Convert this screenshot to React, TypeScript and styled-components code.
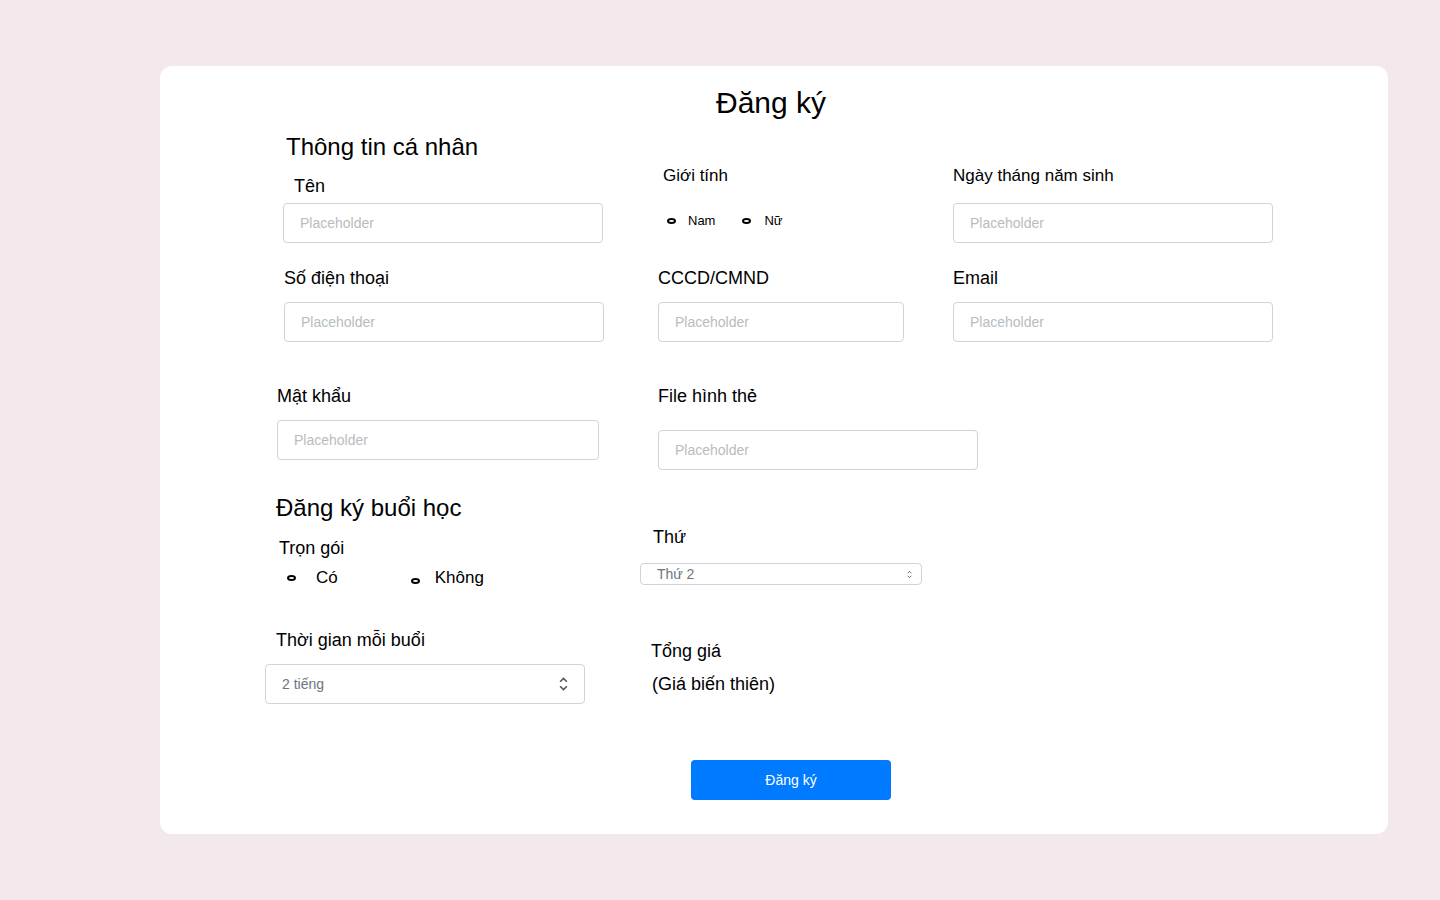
import React from 'react'
import styled, { createGlobalStyle } from 'styled-components'

const GlobalStyle = createGlobalStyle`
  html, body {
    margin: 0;
    padding: 0;
    background: #f3e8ec;
    font-family: 'Liberation Sans', Arial, sans-serif;
    color: #000;
  }
`

const Page = styled.div`
  width: 1440px;
  height: 900px;
  padding-top: 66px;
  padding-left: 160px;
  box-sizing: border-box;
`

const Card = styled.div`
  width: 1228px;
  height: 768px;
  background: #fff;
  border-radius: 12px;
  padding-top: 21px;
  box-sizing: border-box;
`

const Title = styled.h1`
  margin: 0;
  padding-right: 6px;
  font-size: 30px;
  line-height: 32px;
  font-weight: 400;
  text-align: center;
`

const Row = styled.div<{ $mt: number }>`
  display: flex;
  align-items: flex-start;
  margin-top: ${(p) => p.$mt}px;
`

const Col = styled.div<{ $w?: number }>`
  display: flex;
  flex-direction: column;
  align-items: flex-start;
  ${(p) => (p.$w ? `width: ${p.$w}px; flex: none;` : 'flex: 1;')}
`

const Heading = styled.h2<{ $ml: number; $mt?: number }>`
  margin: ${(p) => p.$mt || 0}px 0 0 ${(p) => p.$ml}px;
  font-size: 24px;
  line-height: 28px;
  font-weight: 400;
`

const Label = styled.div<{ $ml: number; $mt?: number; $size?: number }>`
  margin: ${(p) => p.$mt || 0}px 0 0 ${(p) => p.$ml}px;
  font-size: ${(p) => p.$size || 18}px;
  line-height: 22px;
`

const Input = styled.input<{ $ml: number; $mt?: number; $w?: number }>`
  margin: ${(p) => p.$mt || 0}px 0 0 ${(p) => p.$ml}px;
  width: ${(p) => p.$w || 320}px;
  height: 40px;
  box-sizing: border-box;
  border: 1px solid #ced4da;
  border-radius: 4px;
  padding: 0 16px;
  font-family: 'Liberation Sans', Arial, sans-serif;
  font-size: 14px;
  outline: none;
  &::placeholder {
    color: #b8bcc0;
  }
`

const SelectBox = styled.div<{ $ml: number; $mt?: number; $w: number; $h: number; $pr: number }>`
  margin: ${(p) => p.$mt || 0}px 0 0 ${(p) => p.$ml}px;
  width: ${(p) => p.$w}px;
  height: ${(p) => p.$h}px;
  box-sizing: border-box;
  border: 1px solid #ced4da;
  border-radius: 4px;
  padding: 0 ${(p) => p.$pr}px 0 16px;
  display: flex;
  align-items: center;
  justify-content: space-between;
  font-size: 14px;
  color: #6c757d;
`

const RadioGroup = styled.div<{ $ml: number; $mt?: number; $size: number }>`
  margin: ${(p) => p.$mt || 0}px 0 0 ${(p) => p.$ml}px;
  display: flex;
  align-items: center;
  font-size: ${(p) => p.$size}px;
  line-height: ${(p) => p.$size + 4}px;
`

const RadioOption = styled.label<{ $gap: number; $mr?: number; $dy?: number }>`
  display: flex;
  align-items: center;
  gap: ${(p) => p.$gap}px;
  margin-right: ${(p) => p.$mr || 0}px;
  & > span:first-child {
    margin-top: ${(p) => p.$dy || 0}px;
  }
`

const Dot = styled.span`
  display: inline-block;
  width: 9px;
  height: 6px;
  box-sizing: border-box;
  border: 2px solid #000;
  border-radius: 50%;
`

const TextLine = styled.div<{ $ml: number; $mt?: number }>`
  margin: ${(p) => p.$mt || 0}px 0 0 ${(p) => p.$ml}px;
  font-size: 18px;
  line-height: 22px;
`

const Submit = styled.button`
  margin: 56px 0 0 531px;
  width: 200px;
  height: 40px;
  border: none;
  border-radius: 4px;
  background: #007bff;
  color: #fff;
  font-family: 'Liberation Sans', Arial, sans-serif;
  font-size: 14px;
`

const Chevrons = ({ w, h }: { w: number; h: number }) => (
  <svg width={w} height={h} viewBox="0 0 8 14" fill="none" stroke="#555" strokeWidth="1.4">
    <path d="M1 5 L4 2 L7 5" />
    <path d="M1 9 L4 12 L7 9" />
  </svg>
)

export default function App() {
  return (
    <>
      <GlobalStyle />
      <Page>
        <Card>
          <Title>Đăng ký</Title>

          <Row $mt={14}>
            <Col $w={480}>
              <Heading $ml={126}>Thông tin cá nhân</Heading>
              <Label $ml={134} $mt={14}>Tên</Label>
              <Input $ml={123} $mt={6} placeholder="Placeholder" />
            </Col>
            <Col $w={313}>
              <Label $ml={23} $mt={32} $size={17}>Giới tính</Label>
              <RadioGroup $ml={27} $mt={25} $size={13}>
                <RadioOption $gap={12} $mr={27}>
                  <Dot />
                  <span>Nam</span>
                </RadioOption>
                <RadioOption $gap={13}>
                  <Dot />
                  <span>Nữ</span>
                </RadioOption>
              </RadioGroup>
            </Col>
            <Col>
              <Label $ml={0} $mt={32} $size={17}>Ngày tháng năm sinh</Label>
              <Input $ml={0} $mt={16} placeholder="Placeholder" />
            </Col>
          </Row>

          <Row $mt={24}>
            <Col $w={480}>
              <Label $ml={124}>Số điện thoại</Label>
              <Input $ml={124} $mt={13} placeholder="Placeholder" />
            </Col>
            <Col $w={313}>
              <Label $ml={18}>CCCD/CMND</Label>
              <Input $ml={18} $mt={13} $w={246} placeholder="Placeholder" />
            </Col>
            <Col>
              <Label $ml={0}>Email</Label>
              <Input $ml={0} $mt={13} placeholder="Placeholder" />
            </Col>
          </Row>

          <Row $mt={43}>
            <Col $w={480}>
              <Label $ml={117}>Mật khẩu</Label>
              <Input $ml={117} $mt={13} $w={322} placeholder="Placeholder" />
            </Col>
            <Col $w={480}>
              <Label $ml={18}>File hình thẻ</Label>
              <Input $ml={18} $mt={23} placeholder="Placeholder" />
            </Col>
          </Row>

          <Row $mt={24}>
            <Col $w={480}>
              <Heading $ml={116}>Đăng ký buổi học</Heading>
              <Label $ml={119} $mt={15}>Trọn gói</Label>
              <RadioGroup $ml={127} $mt={8} $size={17}>
                <RadioOption $gap={20} $mr={73}>
                  <Dot />
                  <span>Có</span>
                </RadioOption>
                <RadioOption $gap={15} $dy={6}>
                  <Dot />
                  <span>Không</span>
                </RadioOption>
              </RadioGroup>
            </Col>
            <Col $w={313}>
              <Label $ml={13} $mt={32}>Thứ</Label>
              <SelectBox $ml={0} $mt={15} $w={282} $h={22} $pr={9}>
                <span>Thứ 2</span>
                <Chevrons w={5} h={9} />
              </SelectBox>
            </Col>
          </Row>

          <Row $mt={41}>
            <Col $w={480}>
              <Label $ml={116}>Thời gian mỗi buổi</Label>
              <SelectBox $ml={105} $mt={13} $w={320} $h={40} $pr={16}>
                <span>2 tiếng</span>
                <Chevrons w={9} h={16} />
              </SelectBox>
            </Col>
            <Col $w={313}>
              <TextLine $ml={11} $mt={11}>Tổng giá</TextLine>
              <TextLine $ml={12} $mt={11}>(Giá biến thiên)</TextLine>
            </Col>
          </Row>

          <Submit>Đăng ký</Submit>
        </Card>
      </Page>
    </>
  )
}
